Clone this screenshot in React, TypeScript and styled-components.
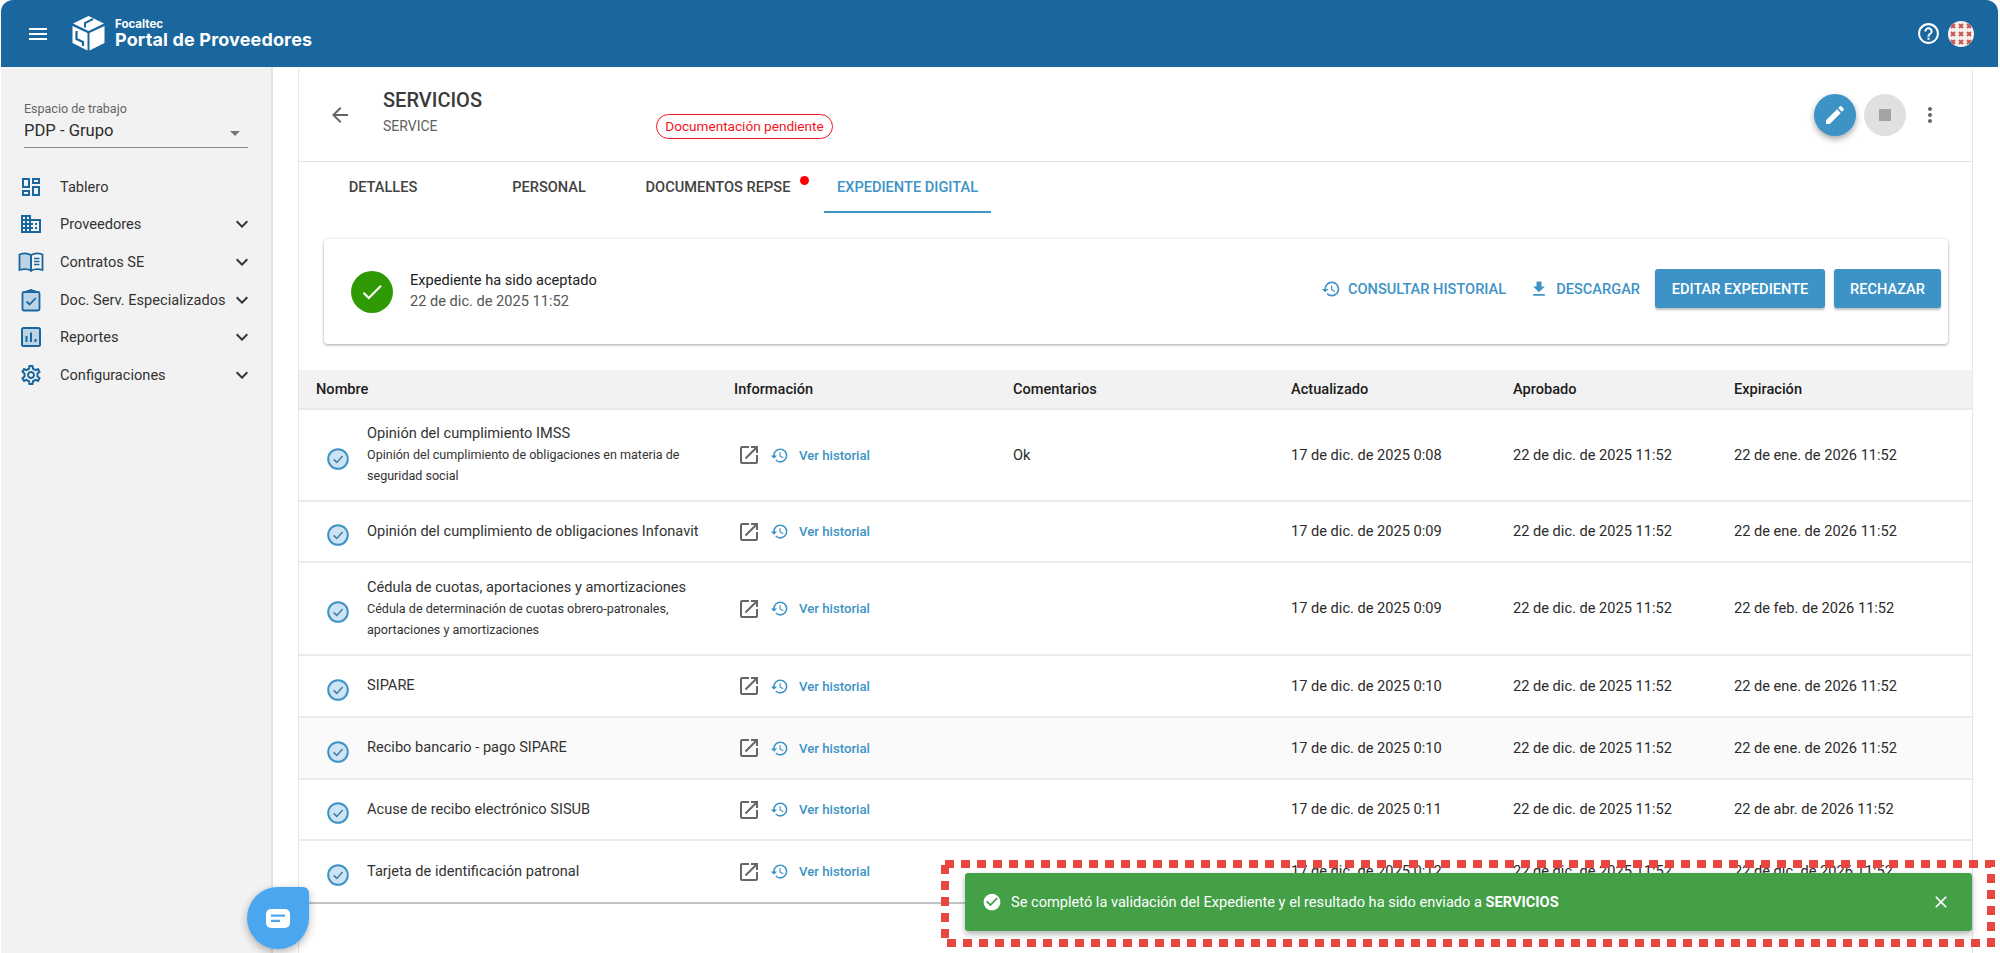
import React from "react";
import styled, { createGlobalStyle } from "styled-components";
import {
  MdMenu, MdHelpOutline, MdArrowBack, MdEdit, MdStop, MdMoreVert, MdHistory, MdFileDownload,
  MdOpenInNew, MdCheck, MdCheckCircle, MdClose, MdOutlineDashboard, MdDomain,
  MdOutlineSettings, MdExpandMore, MdArrowDropDown,
} from "react-icons/md";

const Global = createGlobalStyle`
  html, body { margin: 0; padding: 0; background: #fff; }
  body { font-family: Roboto, "Liberation Sans", sans-serif; color: #212121; font-size: 14.6px; }
  * { box-sizing: border-box; }
`;

const Page = styled.div`
  position: relative;
  width: 2000px;
  height: 953px;
  overflow: hidden;
  background: #fff;
  padding: 0 2px 0 1px;
  display: flex;
  flex-direction: column;
`;
const TopBar = styled.header`
  height: 67px;
  flex: none;
  background: #1a669e;
  border-radius: 12px 12px 0 0;
  color: #fff;
  display: flex;
  align-items: center;
  padding: 0 24px 0 25px;
`;
const MenuButton = styled.span`
  display: flex;
  font-size: 24px;
  margin-right: 22px;
`;
const BrandText = styled.div`
  display: flex;
  flex-direction: column;
  margin-left: 10px;
  font-family: Inter, Lato, sans-serif;
  margin-top: 0;
`;
const BrandSmall = styled.span`
  font-size: 11.5px;
  font-weight: 700;
  line-height: 12px;
`;
const BrandBig = styled.span`
  font-size: 18px;
  font-weight: 700;
  line-height: 19px;
  letter-spacing: 0.15px;
`;
const TopActions = styled.div`
  margin-left: auto;
  display: flex;
  align-items: center;
  gap: 7px;
`;
const Body = styled.div`
  flex: 1;
  display: flex;
  min-height: 0;
`;
const Sidebar = styled.aside`
  width: 272px;
  flex: none;
  background: #f2f2f2;
  border-right: 2px solid #e2e2e2;
  padding: 34px 0 0;
`;
const Workspace = styled.div`
  position: relative;
  margin: 0 23px 0 23px;
  height: 47px;
  border-bottom: 1px solid #8a8a8a;
`;
const WorkspaceLabel = styled.div`
  font-size: 12.5px;
  line-height: 15px;
  color: #666;
`;
const WorkspaceValue = styled.div`
  font-size: 16.6px;
  line-height: 24px;
  margin-top: 3px;
  color: #2b2b2b;
`;
const DropArrow = styled.span`
  position: absolute;
  right: 1px;
  top: 20px;
  color: #757575;
  font-size: 24px;
  display: flex;
`;
const Nav = styled.nav`
  margin-top: 20px;
`;
const NavRow = styled.div`
  height: 37.6px;
  display: flex;
  align-items: center;
  padding: 0 17px 0 17px;
  color: #333;
  font-size: 14.6px;
`;
const NavIcon = styled.span`
  width: 26px;
  display: flex;
  justify-content: center;
  font-size: 24px;
  color: #1a669e;
  margin-right: 16px;
`;
const NavLabel = styled.span`
  flex: 1;
  white-space: nowrap;
`;
const NavChevron = styled.span`
  display: flex;
  font-size: 24px;
  color: #333;
`;
const Main = styled.main`
  flex: 1;
  padding: 1px 25px 0 25px;
  min-width: 0;
`;
const Card = styled.section`
  height: 100%;
  border-left: 1px solid #e6e6e6;
  border-right: 1px solid #e6e6e6;
  border-radius: 4px 4px 0 0;
  position: relative;
`;
const CardHead = styled.div`
  height: 94px;
  border-bottom: 1px solid #e4e4e4;
  display: flex;
  align-items: center;
  padding: 0 30px 0 29px;
`;
const BackIcon = styled.span`
  display: flex;
  font-size: 24px;
  color: #666;
  margin-right: 31px;
`;
const TitleBlock = styled.div`
  width: 273px;
  margin-top: -6px;
`;
const Title = styled.div`
  font-size: 20px;
  font-weight: 500;
  line-height: 26px;
  color: #3a3a3a;
`;
const SubTitle = styled.div`
  font-size: 14px;
  line-height: 20px;
  margin-top: 3px;
  color: #616161;
`;
const Badge = styled.span`
  height: 25px;
  width: 177px;
  margin-top: 23px;
  border: 1.5px solid #f5141e;
  border-radius: 13px;
  color: #f5141e;
  font-size: 13.6px;
  display: flex;
  align-items: center;
  justify-content: center;
  white-space: nowrap;
`;
const HeadActions = styled.div`
  margin-left: auto;
  display: flex;
  align-items: center;
  gap: 8px;
`;
const Fab = styled.span<{ $active?: boolean }>`
  width: 42px;
  height: 42px;
  border-radius: 50%;
  display: flex;
  align-items: center;
  justify-content: center;
  font-size: 24px;
  color: ${(p) => (p.$active ? "#fff" : "#a3a3a3")};
  background: ${(p) => (p.$active ? "#3d93c6" : "#e0e0e0")};
  box-shadow: ${(p) => (p.$active ? "0 3px 6px rgba(0,0,0,.35)" : "none")};
`;
const MoreIcon = styled.span`
  display: flex;
  font-size: 24px;
  color: #666;
  margin-left: 4px;
`;
const Tabs = styled.div`
  height: 51px;
  display: flex;
  padding-left: 1px;
`;
const Tab = styled.div<{ $active?: boolean; $w: number }>`
  position: relative;
  width: ${(p) => p.$w}px;
  height: 51px;
  display: flex;
  align-items: center;
  justify-content: center;
  font-size: 14.6px;
  font-weight: 500;
  white-space: nowrap;
  color: ${(p) => (p.$active ? "#3d93c6" : "#424242")};
  border-bottom: 2px solid ${(p) => (p.$active ? "#3d93c6" : "transparent")};
`;
const TabDot = styled.span`
  position: absolute;
  width: 9px;
  height: 9px;
  right: 15px;
  top: 14px;
  border-radius: 50%;
  background: #f00;
`;
const TabLabel = styled.span<{ $shift?: number }>`
  margin-right: ${(p) => p.$shift || 0}px;
`;
const StatusCard = styled.div`
  margin: 26px 24px 26px 25px;
  height: 105px;
  background: #fff;
  border-radius: 4px;
  box-shadow: 0 1px 3px rgba(0, 0, 0, 0.35), 0 0 2px rgba(0, 0, 0, 0.06);
  display: flex;
  align-items: center;
  padding: 0 7px 0 27px;
`;
const GreenCircle = styled.span`
  width: 42px;
  height: 42px;
  flex: none;
  border-radius: 50%;
  background: #2f9a04;
  color: #fff;
  font-size: 26px;
  display: flex;
  align-items: center;
  justify-content: center;
  margin-right: 17px;
`;
const StatusLines = styled.div`
  line-height: 21px;
  font-size: 14.6px;
  margin-top: -2px;
`;
const StatusDate = styled.div`
  color: #555;
`;
const StatusActions = styled.div`
  margin-left: auto;
  margin-top: -6px;
  display: flex;
  align-items: center;
`;
const TextAction = styled.span`
  display: flex;
  align-items: center;
  gap: 7px;
  margin-right: 23px;
  color: #3d93c6;
  font-weight: 500;
  font-size: 14.6px;
  white-space: nowrap;
`;
const ActionIcon = styled.span`
  display: flex;
  font-size: 20px;
`;
const SolidButton = styled.span<{ $w: number }>`
  width: ${(p) => p.$w}px;
  height: 39px;
  margin-left: ${(p) => (p.$w > 130 ? "-8px" : "9px")};
  background: #3d93c6;
  color: #fff;
  border-radius: 3px;
  font-size: 14.6px;
  font-weight: 500;
  display: flex;
  align-items: center;
  justify-content: center;
  box-shadow: 0 2px 2px rgba(0, 0, 0, 0.25);
  white-space: nowrap;
`;
const gridCols = "418px 279px 278px 222px 221px 1fr";
const TableHead = styled.div`
  height: 40px;
  background: #f2f2f2;
  border-bottom: 2px solid #e8e8e8;
  display: grid;
  grid-template-columns: ${gridCols};
  align-items: center;
  padding-left: 17px;
  font-weight: 500;
  color: #1c1c1c;
  font-size: 14.6px;
`;
const Row = styled.div<{ $h: number; $striped?: boolean; $last?: boolean }>`
  height: ${(p) => p.$h}px;
  display: grid;
  grid-template-columns: ${gridCols};
  align-items: center;
  padding-left: 17px;
  background: ${(p) => (p.$striped ? "#fafafa" : "#fff")};
  border-bottom: 2px solid ${(p) => (p.$last ? "#c4c4c4" : "#ececec")};
  color: #2b2b2b;
`;
const NameCell = styled.div`
  display: flex;
  align-items: center;
  padding-left: 11px;
`;
const StatusIcon = styled.svg`
  width: 22px;
  height: 22px;
  flex: none;
  margin-right: 18px;
  margin-top: 7px;
`;
const RowTitle = styled.div`
  font-size: 14.6px;
  line-height: 21px;
  color: #333;
  white-space: nowrap;
`;
const RowSub = styled.div`
  font-size: 12.55px;
  line-height: 21px;
  color: #333;
`;
const NameText = styled.div`
  width: 330px;
  margin-top: -1px;
`;
const InfoCell = styled.div`
  display: flex;
  align-items: center;
  padding-left: 3px;
`;
const OpenIcon = styled.span`
  display: flex;
  font-size: 24px;
  color: #666;
  margin-right: 9px;
`;
const HistoryIcon = styled.span`
  display: flex;
  font-size: 19px;
  color: #3d93c6;
  margin-right: 10px;
`;
const HistoryLink = styled.span`
  color: #3d93c6;
  font-weight: 500;
  font-size: 13.2px;
`;
const Cell = styled.div`
  font-size: 14.6px;
  white-space: nowrap;
  margin-top: -1px;
`;
const Toast = styled.div`
  position: absolute;
  left: 965px;
  top: 873px;
  width: 1007px;
  height: 58px;
  background: #43a047;
  color: #fff;
  border-radius: 3px;
  display: flex;
  align-items: center;
  padding: 0 21px 0 17px;
  font-size: 14.6px;
  box-shadow: 0 3px 6px rgba(0, 0, 0, 0.3);
`;
const ToastIcon = styled.span`
  display: flex;
  font-size: 20px;
  margin-right: 9px;
`;
const ToastClose = styled.span`
  display: flex;
  margin-left: auto;
  font-size: 20px;
`;
const Marker = styled.svg`
  position: absolute;
  left: 941px;
  top: 860px;
  width: 1054px;
  height: 87px;
  pointer-events: none;
`;
const ChatBubble = styled.div`
  position: absolute;
  left: 247px;
  top: 887px;
  width: 62px;
  height: 62px;
  background: #4aa6ee;
  border-radius: 50% 6px 50% 50%;
  display: flex;
  align-items: center;
  justify-content: center;
  box-shadow: 0 3px 8px rgba(0, 0, 0, 0.3);
`;

const Logo = () => (
  <svg width="33" height="35" viewBox="0 0 33 35">
    <path fill="#fff" d="M16.5 0 L32 7.5 L16.5 15 L1 7.5 Z" />
    <path fill="#fff" d="M0.5 10 L15.5 17 V34.5 L0.5 27 Z" />
    <path fill="#fff" d="M32.5 10 L17.5 17 V34.5 L32.5 27 Z" />
    <path fill="none" stroke="#1a669e" strokeWidth="2" d="M21 3 L13 7 V11.5" />
    <path fill="none" stroke="#1a669e" strokeWidth="2.2" d="M4.5 15 V23 L11 26 V30" />
  </svg>
);

const Avatar = () => (
  <svg width="26" height="26" viewBox="0 0 26 26">
    <defs>
      <pattern id="av" x="1" y="1" width="8" height="8" patternUnits="userSpaceOnUse">
        <path fill="none" stroke="#c8544e" strokeWidth="2" d="M2 2 L6 6 M6 2 L2 6" />
      </pattern>
    </defs>
    <circle cx="13" cy="13" r="13" fill="#f8f0ef" />
    <circle cx="13" cy="13" r="13" fill="url(#av)" />
  </svg>
);

const BookIcon = () => (
  <svg width="26" height="24" viewBox="0 0 26 24" fill="none" stroke="#1a669e" strokeWidth="1.8">
    <path d="M1.5 4.5 C5 3 9.5 3 13 5 V20.5 C9.5 18.8 5 18.8 1.5 20 Z" fill="#bcd4e6" />
    <path d="M24.5 4.5 C21 3 16.5 3 13 5 V20.5 C16.5 18.8 21 18.8 24.5 20 Z" />
    <path d="M16 8.5h5.5M16 11.5h5.5M16 14.5h5.5" strokeWidth="1.5" />
  </svg>
);

const ClipboardIcon = () => (
  <svg width="24" height="24" viewBox="0 0 24 24" fill="none" stroke="#1a669e" strokeWidth="1.8">
    <rect x="3.5" y="4" width="17" height="18.5" rx="1.5" fill="#bcd4e6" />
    <path d="M8.5 4.5 V3 H10.3 A1.8 1.8 0 0 1 13.7 3 H15.5 V4.5" fill="#1a669e" />
    <path d="M7.5 13.5 L10.6 16.5 L16.8 10" stroke="#1a669e" strokeWidth="1.8" />
  </svg>
);

const BarsIcon = () => (
  <svg width="24" height="24" viewBox="0 0 24 24" fill="none" stroke="#1a669e" strokeWidth="2">
    <rect x="3" y="3" width="18" height="18" rx="1.5" fill="#bcd4e6" />
    <path d="M7.5 17 V11 M12 17 V7.5 M16.5 17 V14" />
  </svg>
);

const RowCheck = () => (
  <StatusIcon viewBox="0 0 22 22">
    <circle cx="11" cy="11" r="9.8" fill="#cfe4f2" stroke="#3d93c6" strokeWidth="2" />
    <path d="M6.6 11.4 L9.8 14.4 L15.6 8" fill="none" stroke="#3d7fa8" strokeWidth="1.5" />
  </StatusIcon>
);

const ChatIcon = () => (
  <svg width="24" height="19" viewBox="0 0 24 19">
    <path fill="#fff" d="M5 0h14a5 5 0 0 1 5 5v9a5 5 0 0 1-5 5H5a5 5 0 0 1-5-5V5a5 5 0 0 1 5-5z" />
    <path fill="#4aa6ee" d="M5 5.5h14v2.2H5zM5 10.8h9v2.2H5z" />
  </svg>
);

const nav = [
  { label: "Tablero", icon: <MdOutlineDashboard />, chevron: false },
  { label: "Proveedores", icon: <MdDomain />, chevron: true },
  { label: "Contratos SE", icon: <BookIcon />, chevron: true },
  { label: "Doc. Serv. Especializados", icon: <ClipboardIcon />, chevron: true },
  { label: "Reportes", icon: <BarsIcon />, chevron: true },
  { label: "Configuraciones", icon: <MdOutlineSettings />, chevron: true },
];

type R = { title: string; sub?: string; comment?: string; upd: string; exp: string; h: number };
const rows: R[] = [
  { title: "Opinión del cumplimiento IMSS", sub: "Opinión del cumplimiento de obligaciones en materia de seguridad social", comment: "Ok", upd: "17 de dic. de 2025 0:08", exp: "22 de ene. de 2026 11:52", h: 92 },
  { title: "Opinión del cumplimiento de obligaciones Infonavit", upd: "17 de dic. de 2025 0:09", exp: "22 de ene. de 2026 11:52", h: 61 },
  { title: "Cédula de cuotas, aportaciones y amortizaciones", sub: "Cédula de determinación de cuotas obrero-patronales, aportaciones y amortizaciones", upd: "17 de dic. de 2025 0:09", exp: "22 de feb. de 2026 11:52", h: 93 },
  { title: "SIPARE", upd: "17 de dic. de 2025 0:10", exp: "22 de ene. de 2026 11:52", h: 62 },
  { title: "Recibo bancario - pago SIPARE", upd: "17 de dic. de 2025 0:10", exp: "22 de ene. de 2026 11:52", h: 62 },
  { title: "Acuse de recibo electrónico SISUB", upd: "17 de dic. de 2025 0:11", exp: "22 de abr. de 2026 11:52", h: 61 },
  { title: "Tarjeta de identificación patronal", upd: "17 de dic. de 2025 0:12", exp: "22 de dic. de 2026 11:52", h: 63 },
];

export default function App() {
  return (
    <Page>
      <Global />
      <TopBar>
        <MenuButton><MdMenu /></MenuButton>
        <Logo />
        <BrandText>
          <BrandSmall>Focaltec</BrandSmall>
          <BrandBig>Portal de Proveedores</BrandBig>
        </BrandText>
        <TopActions>
          <MdHelpOutline size={25} />
          <Avatar />
        </TopActions>
      </TopBar>
      <Body>
        <Sidebar>
          <Workspace>
            <WorkspaceLabel>Espacio de trabajo</WorkspaceLabel>
            <WorkspaceValue>PDP - Grupo</WorkspaceValue>
            <DropArrow><MdArrowDropDown /></DropArrow>
          </Workspace>
          <Nav>
            {nav.map((n) => (
              <NavRow key={n.label}>
                <NavIcon>{n.icon}</NavIcon>
                <NavLabel>{n.label}</NavLabel>
                {n.chevron && <NavChevron><MdExpandMore /></NavChevron>}
              </NavRow>
            ))}
          </Nav>
        </Sidebar>
        <Main>
          <Card>
            <CardHead>
              <BackIcon><MdArrowBack /></BackIcon>
              <TitleBlock>
                <Title>SERVICIOS</Title>
                <SubTitle>SERVICE</SubTitle>
              </TitleBlock>
              <Badge>Documentación pendiente</Badge>
              <HeadActions>
                <Fab $active><MdEdit /></Fab>
                <Fab><MdStop /></Fab>
                <MoreIcon><MdMoreVert /></MoreIcon>
              </HeadActions>
            </CardHead>
            <Tabs>
              <Tab $w={166}>DETALLES</Tab>
              <Tab $w={166}>PERSONAL</Tab>
              <Tab $w={192}><TabLabel $shift={20}>DOCUMENTOS REPSE</TabLabel><TabDot /></Tab>
              <Tab $w={167} $active>EXPEDIENTE DIGITAL</Tab>
            </Tabs>
            <StatusCard>
              <GreenCircle><MdCheck /></GreenCircle>
              <StatusLines>
                <div>Expediente ha sido aceptado</div>
                <StatusDate>22 de dic. de 2025 11:52</StatusDate>
              </StatusLines>
              <StatusActions>
                <TextAction><ActionIcon><MdHistory /></ActionIcon>CONSULTAR HISTORIAL</TextAction>
                <TextAction><ActionIcon><MdFileDownload /></ActionIcon>DESCARGAR</TextAction>
                <SolidButton $w={170}>EDITAR EXPEDIENTE</SolidButton>
                <SolidButton $w={107}>RECHAZAR</SolidButton>
              </StatusActions>
            </StatusCard>
            <TableHead>
              <span>Nombre</span>
              <span>Información</span>
              <span>Comentarios</span>
              <span>Actualizado</span>
              <span>Aprobado</span>
              <span>Expiración</span>
            </TableHead>
            {rows.map((r, i) => (
              <Row key={r.title} $h={r.h} $striped={i === 4} $last={i === rows.length - 1}>
                <NameCell>
                  <RowCheck />
                  <NameText>
                    <RowTitle>{r.title}</RowTitle>
                    {r.sub && <RowSub>{r.sub}</RowSub>}
                  </NameText>
                </NameCell>
                <InfoCell>
                  <OpenIcon><MdOpenInNew /></OpenIcon>
                  <HistoryIcon><MdHistory /></HistoryIcon>
                  <HistoryLink>Ver historial</HistoryLink>
                </InfoCell>
                <Cell>{r.comment}</Cell>
                <Cell>{r.upd}</Cell>
                <Cell>22 de dic. de 2025 11:52</Cell>
                <Cell>{r.exp}</Cell>
              </Row>
            ))}
          </Card>
        </Main>
      </Body>
      <ChatBubble><ChatIcon /></ChatBubble>
      <Toast>
        <ToastIcon><MdCheckCircle /></ToastIcon>
        <span>Se completó la validación del Expediente y el resultado ha sido enviado a <b>SERVICIOS</b></span>
        <ToastClose><MdClose /></ToastClose>
      </Toast>
      <Marker viewBox="0 0 1054 87">
        <rect x="4" y="4" width="1046" height="79" fill="none" stroke="#e8473f" strokeWidth="8" strokeDasharray="9 7" />
      </Marker>
    </Page>
  );
}
